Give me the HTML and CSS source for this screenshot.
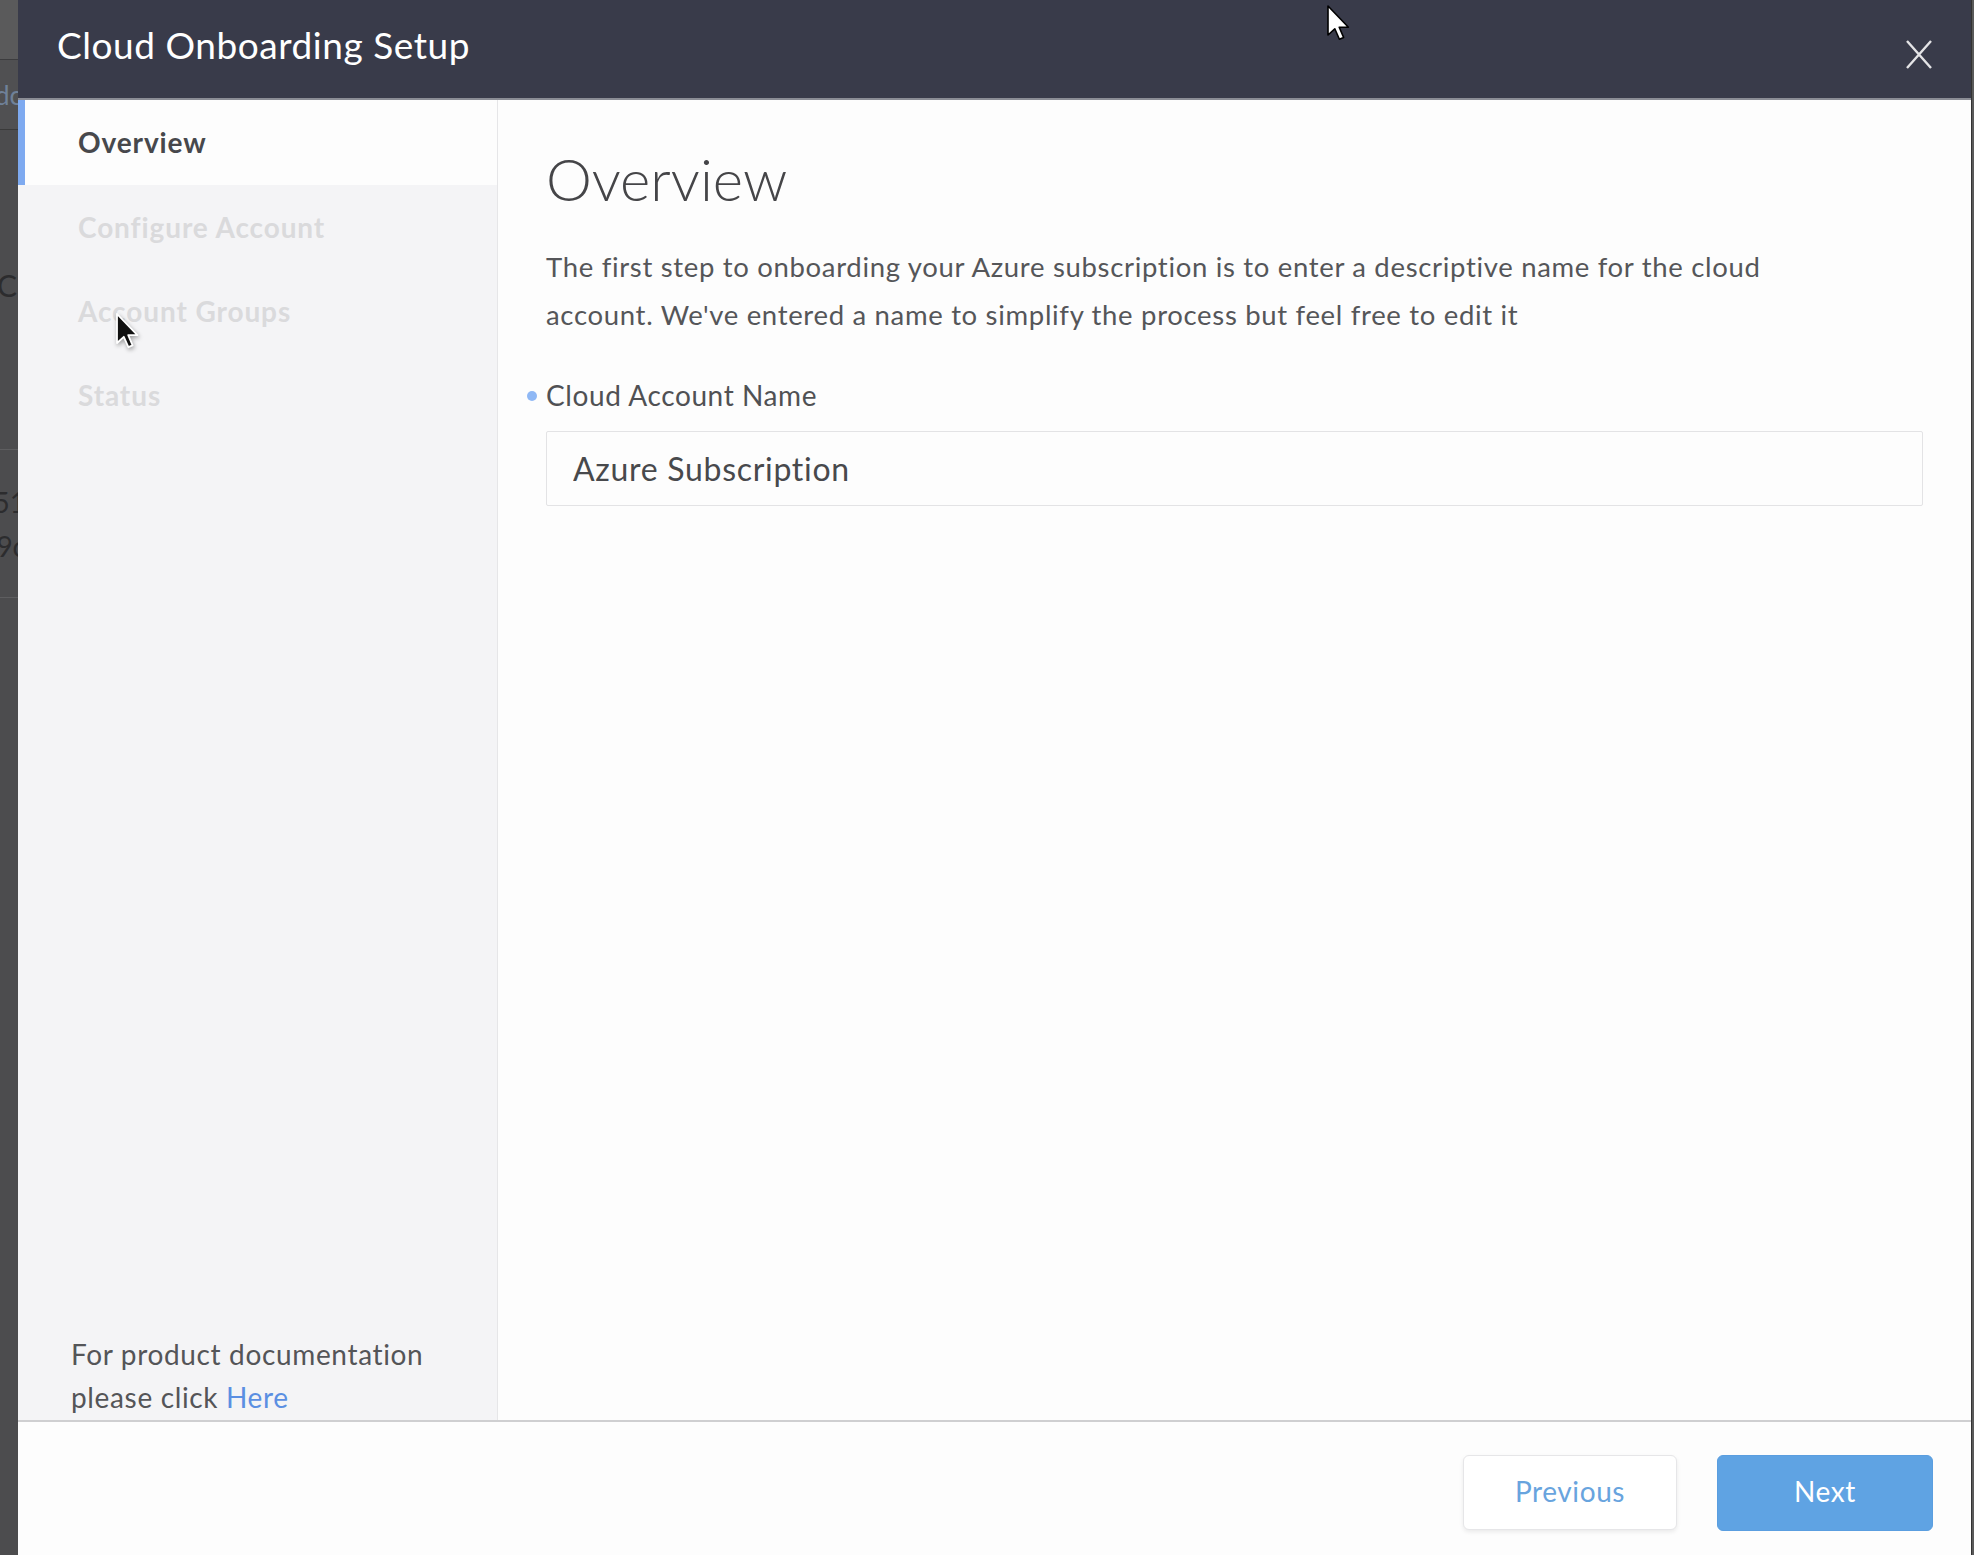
FILE: index.html
```html
<!DOCTYPE html>
<html lang="en">
<head>
<meta charset="utf-8">
<title>Cloud Onboarding Setup</title>
<link rel="stylesheet" href="styles.css">
</head>
<body>
<div class="page">
  <div class="bg-strip">
    <div class="strip-top"></div>
    <div class="strip-link"><span>dc</span></div>
    <div class="strip-c"><span>C</span></div>
    <div class="strip-nums"><span>51</span><span>9c</span></div>
    <div class="strip-rest"></div>
  </div>

  <div class="modal">
    <header class="modal-header">
      <h1 class="modal-title">Cloud Onboarding Setup</h1>
      <button class="close-btn" aria-label="Close">
        <svg width="28" height="29" viewBox="0 0 28 29"><path d="M2 1 L26 28 M26 1 L2 28" stroke="#e4e4e6" stroke-width="2.4" fill="none"/></svg>
      </button>
    </header>

    <div class="modal-body">
      <aside class="sidebar">
        <nav class="steps">
          <div class="step active">Overview</div>
          <div class="step">Configure Account</div>
          <div class="step">Account Groups</div>
          <div class="step">Status</div>
        </nav>
        <p class="doc">For product documentation please click <a class="doc-link" href="#">Here</a></p>
      </aside>

      <main class="content">
        <h2 class="content-title">Overview</h2>
        <p class="intro">The first step to onboarding your Azure subscription is to enter a descriptive name for the cloud account. We've entered a name to simplify the process but feel free to edit it</p>
        <label class="field-label"><span class="req-dot"></span>Cloud Account Name</label>
        <input class="text-input" type="text" value="Azure Subscription">
      </main>
    </div>

    <footer class="modal-footer">
      <button class="btn btn-secondary">Previous</button>
      <button class="btn btn-primary">Next</button>
    </footer>
  </div>

  <div class="edge"></div>
</div>

<svg class="cursor cursor-top" width="26" height="38" viewBox="0 0 13 19"><path d="M1 1 L1 15.5 L4.4 12.4 L6.7 17.6 L8.8 16.7 L6.6 11.6 L11.2 11.6 Z" fill="#fff" stroke="#000" stroke-width="0.8" stroke-linejoin="round"/></svg>
<svg class="cursor cursor-side" width="26" height="40" viewBox="0 0 13 20"><path d="M1 1 L1 15.5 L4.4 12.4 L6.7 17.6 L8.8 16.7 L6.6 11.6 L11.2 11.6 Z" fill="#111" stroke="#fff" stroke-width="0.9" stroke-linejoin="round"/></svg>
</body>
</html>
```

FILE: styles.css
```css
* { box-sizing: border-box; }

html, body {
  margin: 0;
  padding: 0;
}

body {
  width: 1974px;
  height: 1555px;
  overflow: hidden;
  background: #4b4b4d;
  font-family: "Lato", "Open Sans", sans-serif;
  position: relative;
}

.page {
  display: flex;
  height: 1555px;
}

/* background page peeking at the left */
.bg-strip {
  width: 18px;
  flex: none;
  display: flex;
  flex-direction: column;
  overflow: hidden;
  background: #4c4c4e;
}
.strip-top {
  height: 60px;
  background: #5a5a5b;
  border-bottom: 1px solid #3c3c3e;
}
.strip-link {
  height: 70px;
  display: flex;
  justify-content: flex-end;
  align-items: center;
  border-bottom: 1px solid #3a3a3a;
  background: #505052;
}
.strip-link span {
  font-size: 26px;
  color: #6f8199;
  margin-right: -4px;
}
.strip-c {
  height: 320px;
  display: flex;
  justify-content: flex-end;
  align-items: center;
  padding-bottom: 10px;
  border-bottom: 1px solid #5e5e60;
}
.strip-c span {
  font-size: 30px;
  color: #2c2c2e;
  margin-right: 1px;
}
.strip-nums {
  height: 148px;
  display: flex;
  flex-direction: column;
  align-items: flex-end;
  justify-content: center;
  gap: 4px;
  border-bottom: 1px solid #5e5e60;
}
.strip-nums span {
  font-size: 28px;
  line-height: 40px;
  color: #2c2c2e;
  margin-right: -8px;
}
.strip-rest { flex: 1; }

.edge {
  width: 3px;
  flex: none;
  background: #5a5a5a;
  border-left: 1px solid #333;
}

/* modal */
.modal {
  width: 1953px;
  flex: none;
  display: flex;
  flex-direction: column;
  background: #fdfdfd;
}

.modal-header {
  height: 100px;
  flex: none;
  background: #393b4a;
  border-bottom: 2px solid #8b8d95;
  display: flex;
  justify-content: space-between;
  align-items: flex-start;
  padding: 0 38px 0 39px;
}
.modal-title {
  margin: 0;
  padding-top: 23px;
  font-size: 37px;
  font-weight: 400;
  line-height: 43px;
  color: #ffffff;
  letter-spacing: 0.55px;
}
.close-btn {
  margin-top: 40px;
  padding: 0;
  border: 0;
  background: none;
  width: 28px;
  height: 29px;
  display: block;
}
.close-btn svg { display: block; }

.modal-body {
  height: 1320px;
  flex: none;
  display: flex;
}

.sidebar {
  width: 480px;
  flex: none;
  background: #f4f4f6;
  border-right: 1px solid #e6e6e8;
  display: flex;
  flex-direction: column;
}

.steps {
  display: flex;
  flex-direction: column;
}
.step {
  height: 84px;
  display: flex;
  align-items: center;
  padding-left: 53px;
  border-left: 7px solid transparent;
  font-size: 28px;
  font-weight: 700;
  letter-spacing: 0.9px;
  color: #dadadc;
}
.step.active {
  height: 85px;
  padding-bottom: 2px;
  background: #fdfdfd;
  border-left-color: #7eaaf0;
  color: #47484c;
}

.doc {
  margin: auto 0 0 0;
  padding: 0 40px 1px 53px;
  font-size: 28px;
  line-height: 43px;
  letter-spacing: 0.65px;
  color: #545558;
}
.doc-link {
  color: #5b8fe2;
  text-decoration: none;
}

.content {
  flex: 1;
  padding: 44px 48px 0 48px;
  background: #fdfdfd;
}

.content-title {
  margin: 0;
  font-size: 58px;
  font-weight: 300;
  line-height: 70px;
  color: #454548;
}

.intro {
  margin: 29px 0 0 0;
  max-width: 1262px;
  font-size: 27.5px;
  line-height: 48px;
  letter-spacing: 0.68px;
  color: #555659;
}

.field-label {
  position: relative;
  display: block;
  margin-top: 38px;
  font-size: 28px;
  line-height: 36px;
  letter-spacing: 0.6px;
  color: #505154;
}
.req-dot {
  position: absolute;
  left: -19px;
  top: 14px;
  width: 10px;
  height: 10px;
  border-radius: 50%;
  background: #8fb8f5;
}

.text-input {
  display: block;
  margin-top: 18px;
  width: 1377px;
  height: 75px;
  padding: 0 26px;
  border: 1px solid #e3e3e5;
  border-radius: 2px;
  background: #fdfdfd;
  font-family: "Lato", "Open Sans", sans-serif;
  font-size: 32px;
  letter-spacing: 0.7px;
  color: #48494c;
  outline: none;
}

.modal-footer {
  flex: 1;
  border-top: 2px solid #cfcfd1;
  display: flex;
  justify-content: flex-end;
  align-items: flex-start;
  gap: 40px;
  padding: 33px 38px 0 0;
  background: #fdfdfd;
}

.btn {
  width: 214px;
  height: 75px;
  padding: 0 0 4px 0;
  border-radius: 6px;
  font-family: "Lato", "Open Sans", sans-serif;
  font-size: 28px;
  letter-spacing: 0.6px;
  font-weight: 400;
  cursor: pointer;
}
.btn-secondary {
  background: #ffffff;
  border: 1px solid #e6e6e8;
  color: #68a4de;
  box-shadow: 0 2px 4px rgba(0,0,0,0.08);
}
.btn-primary {
  width: 216px;
  height: 76px;
  background: #5fa3e3;
  border: 1px solid #5a9ee0;
  color: #ffffff;
}

/* screen-recording mouse pointers */
.cursor {
  position: absolute;
  pointer-events: none;
}
.cursor-top {
  left: 1326px;
  top: 4px;
}
.cursor-side {
  left: 115px;
  top: 312px;
  filter: drop-shadow(1px 2px 2px rgba(0,0,0,0.35));
}
```
